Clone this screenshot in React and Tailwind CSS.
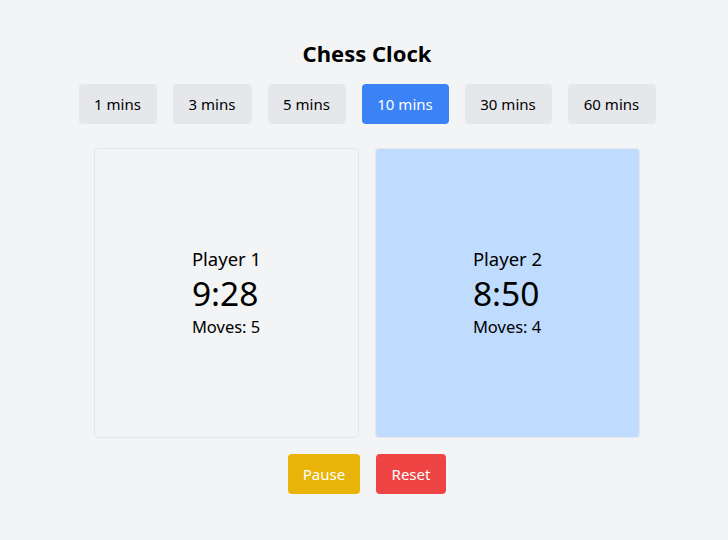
import React from "react";

export default function App() {
  const times = [
    { t: 1, w: "w-[78px]" },
    { t: 3, w: "w-[79px]" },
    { t: 5, w: "w-[78px]" },
    { t: 10, w: "w-[87px]" },
    { t: 30, w: "w-[87px]" },
    { t: 60, w: "w-[88px]" },
  ];
  return (
    <div
      className="min-h-screen bg-[#f3f4f6] flex flex-col items-center pt-[37px] pl-[6px]"
      style={{ fontFamily: '"Noto Sans", sans-serif' }}
    >
      <h1 className="text-[22px] font-bold text-black leading-8 mb-[15px]">Chess Clock</h1>
      <div className="flex gap-4 mb-6">
        {times.map(({ t, w }) => (
          <button
            key={t}
            className={
              t === 10
                ? `${w} h-10 rounded bg-[#3b82f6] text-white text-[15px]`
                : `${w} h-10 rounded bg-[#e5e7eb] text-black text-[15px]`
            }
          >
            {t} mins
          </button>
        ))}
      </div>
      <div className="flex gap-4 mb-4">
        <div className="w-[265px] h-[290px] rounded border border-[#e5e7eb] bg-[#f3f4f6] flex items-center justify-center">
          <div className="text-black">
            <div className="text-[18.5px] leading-7">Player 1</div>
            <div className="text-[33.5px] leading-10">9:28</div>
            <div className="text-[16.5px] leading-7">Moves: 5</div>
          </div>
        </div>
        <div className="w-[265px] h-[290px] rounded border border-[#e5e7eb] bg-[#bfdbfe] flex items-center justify-center">
          <div className="text-black">
            <div className="text-[18.5px] leading-7">Player 2</div>
            <div className="text-[33.5px] leading-10">8:50</div>
            <div className="text-[16.5px] leading-7">Moves: 4</div>
          </div>
        </div>
      </div>
      <div className="flex gap-4">
        <button className="w-[72px] h-10 rounded bg-[#eab308] text-white text-[15px]">Pause</button>
        <button className="w-[70px] h-10 rounded bg-[#ef4444] text-white text-[15px]">Reset</button>
      </div>
    </div>
  );
}
